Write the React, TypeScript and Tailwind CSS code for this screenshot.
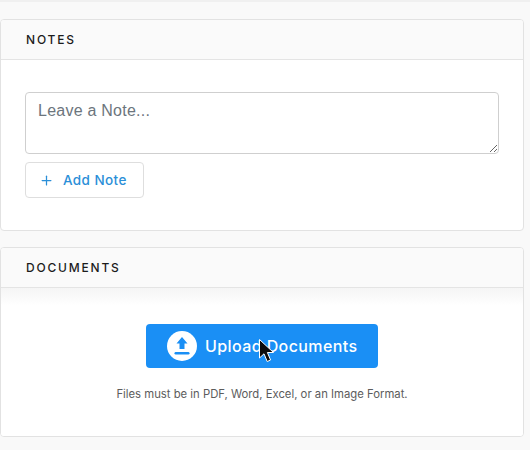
import { Plus } from 'lucide-react'

function CardHeader({ title }: { title: string }) {
	return (
		<div className="flex h-[40px] items-center border-b border-[#e4e4e4] bg-[#fafafa] pl-[25px]">
			<h2 className="text-[12px] leading-none font-medium tracking-[0.15em] text-[#1c1c1c]">{title}</h2>
		</div>
	)
}

function UploadIcon() {
	return (
		<svg width="30" height="30" viewBox="0 0 30 30" className="shrink-0">
			<circle cx="15" cy="15" r="15" fill="#fff" />
			<path d="M15 6 L20.5 12.5 H17.5 V18 H12.5 V12.5 H9.5 Z" fill="#1a8ff5" />
			<rect x="7.5" y="21" width="15" height="2.5" rx="1.2" fill="#1a8ff5" />
		</svg>
	)
}

function Cursor() {
	return (
		<svg width="18" height="26" viewBox="0 0 18 26" className="absolute left-[112px] top-[14px]">
			<path
				d="M1.5 1.5 V20 L6 15.8 L9.2 23.5 L12.6 22 L9.4 14.5 H15.5 Z"
				fill="#0c0c0c"
				stroke="#fff"
				strokeWidth="1"
				strokeLinejoin="round"
			/>
		</svg>
	)
}

export default function App() {
	return (
		<div className="h-[450px] w-[530px] overflow-hidden bg-[#f9f9f9] font-['Inter',sans-serif]">
			<div className="h-[2px] bg-[#f0f0f0]" />
			<div className="flex w-[524px] flex-col gap-[16px] pt-[17px]">
				<section className="overflow-hidden rounded-[4px] border border-[#e2e2e2] bg-white">
					<CardHeader title="NOTES" />
					<div className="flex h-[170px] flex-col items-start px-[24px] pt-[32px]">
						<textarea
							placeholder="Leave a Note..."
							className="block h-[62px] w-[474px] rounded-[4px] border border-[#cfcfcf] bg-white px-[12px] py-[6px] text-[16px] leading-[24px] font-['Liberation_Sans',sans-serif] tracking-[0.015em] outline-none placeholder:text-[#6c757d]"
						/>
						<button className="mt-[8px] flex h-[36px] w-[119px] items-center rounded-[4px] border border-[#dedede] bg-white pl-[13px] text-[13.5px] font-medium tracking-[0.03em] text-[#2b8fd8]">
							<Plus size={15} strokeWidth={2} />
							<span className="ml-[9px]">Add Note</span>
						</button>
					</div>
				</section>
				<section className="overflow-hidden rounded-[4px] border border-[#e2e2e2] bg-white">
					<CardHeader title="DOCUMENTS" />
					<div className="flex h-[148px] flex-col items-center bg-gradient-to-b from-[#f5f5f5] via-white via-[12%] to-white pt-[36px]">
						<button className="relative flex h-[44px] w-[232px] items-center rounded-[4px] bg-[#1a8ff5] pl-[21px] text-[16px] font-medium tracking-[0.025em] text-white">
							<UploadIcon />
							<span className="ml-[8px]">Upload Documents</span>
							<Cursor />
						</button>
						<p className="mt-[20px] text-[11.3px] leading-[13px] text-[#5c5c5c]">
							Files must be in PDF, Word, Excel, or an Image Format.
						</p>
					</div>
				</section>
			</div>
		</div>
	)
}
